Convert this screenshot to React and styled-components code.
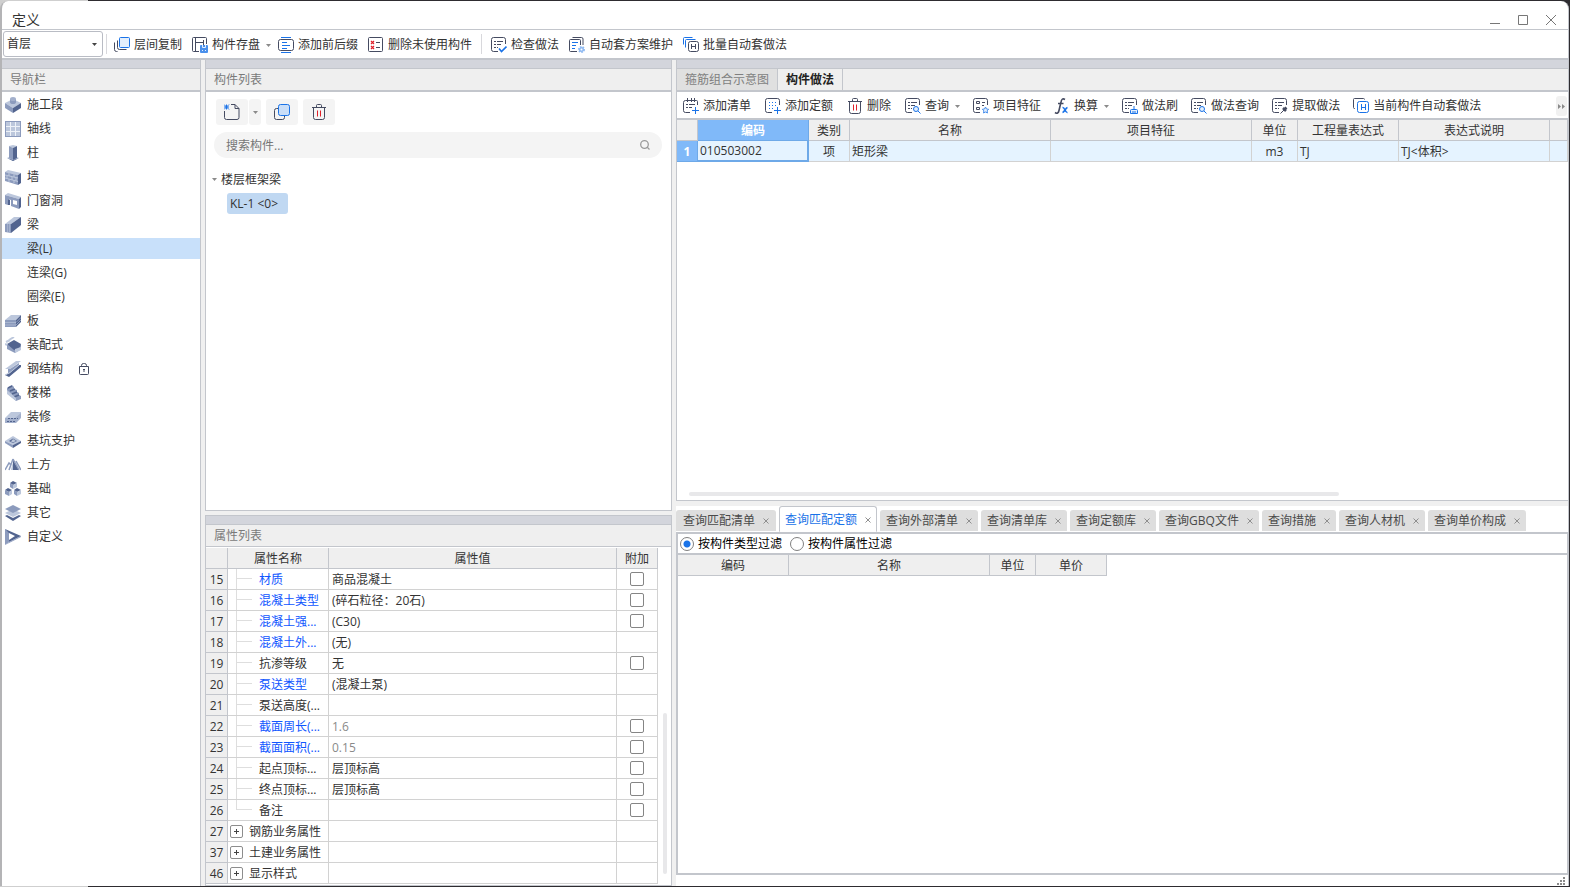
import React from 'react';
import styled, { createGlobalStyle, css } from 'styled-components';

const INK = '#454b61';
const BLUE = '#1a73e8';
const LINE = '#c3c6cc';
const GRID = '#d2d2d2';
const DARK = '#52648f';
const MID = '#8c9bbd';
const LIGHT = '#bcc7dc';

const GlobalStyle = createGlobalStyle`
	* {
		box-sizing: border-box;
	}
	body {
		margin: 0;
		background: linear-gradient(to right, #cfcfcf 88px, #2e2c30 88px);
		font-family: "Open Sans", "Noto Sans CJK SC", sans-serif;
		font-size: 12px;
		line-height: 20px;
		color: #333;
	}
	button, input, select {
		font: inherit;
		color: inherit;
		margin: 0;
	}
	button {
		border: none;
		background: none;
		padding: 0;
		white-space: nowrap;
	}
	svg {
		display: block;
		flex: none;
	}
`;

const Frame = styled.div`
	display: flex;
	flex-direction: column;
	height: calc(100vh - 2px);
	margin: 1px 1px 1px 0;
	border-left: 2px solid #b4b4b6;
	border-right: 1px solid ${LINE};
	border-radius: 8px 8px 0 0;
	background: #fff;
	overflow: hidden;
`;

const TitleBar = styled.header`
	display: flex;
	align-items: center;
	justify-content: space-between;
	height: 29px;
	padding: 9px 11px 0 10px;
	border-bottom: 1px solid ${LINE};
	font-size: 14px;
`;

const WindowButtons = styled.div`
	display: flex;
	gap: 16px;
`;

const MainBar = styled.div`
	display: flex;
	align-items: center;
	height: 30px;
	padding-left: 1px;
	border-bottom: 2px solid ${LINE};
`;

const FloorPicker = styled.div`
	position: relative;
	margin-right: 3px;
	& > select {
		display: block;
		width: 100px;
		height: 26px;
		padding: 0 3px;
		border: 1px solid #b9bcc4;
		border-radius: 3px;
		background: #fff;
		appearance: none;
	}
	& > svg {
		position: absolute;
		right: 6px;
		top: 12px;
		pointer-events: none;
	}
`;

const Divider = styled.span`
	width: 1px;
	height: 20px;
	background: #d8d8dc;
	margin: 0 ${({ $after }) => $after}px 0 ${({ $before }) => $before || 0}px;
`;

const MainButton = styled.button`
	display: flex;
	align-items: center;
	gap: 4px;
	height: 26px;
	padding: 2px ${({ $menu }) => $menu ? '2px' : '5px'} 0 5px;
	& > svg:nth-of-type(2) {
		margin-left: 2px;
	}
`;

const Workspace = styled.div`
	display: flex;
	gap: 4px;
	flex: 1;
	min-height: 0;
	background: #f0f0f0;
`;

const Panel = styled.section`
	display: flex;
	flex-direction: column;
	min-height: 0;
	min-width: 0;
	background: #fff;
	border: solid ${LINE};
	border-width: ${({ $edges }) => $edges || '0 1px 1px'};
`;

const NavPanel = styled(Panel)`
	flex: 0 0 199px;
`;

const MiddleColumn = styled.div`
	display: flex;
	flex-direction: column;
	gap: 4px;
	flex: 0 0 467px;
	min-height: 0;
	& > :first-child {
		flex: 1;
	}
`;

const RightColumn = styled.div`
	display: grid;
	grid-template-columns: minmax(0, 1fr);
	grid-template-rows: minmax(0, 36fr) minmax(0, 31fr);
	gap: 5px;
	flex: 1;
	min-width: 0;
`;

const Strip = styled.div`
	flex: none;
	height: 9px;
	background: #d3d5dc;
	border-bottom: 1px solid ${LINE};
`;

const PanelTitle = styled.h2`
	flex: none;
	margin: 0;
	height: ${({ $thin }) => $thin ? '22px' : '23px'};
	padding: 0 8px;
	border-bottom: ${({ $thin }) => $thin ? '1px' : '2px'} solid ${LINE};
	background: #efefef;
	color: #7a7a7a;
	font-size: 12px;
	font-weight: 400;
	line-height: 21px;
`;

const NavList = styled.ul`
	display: flex;
	flex-direction: column;
	gap: 3px;
	margin: 0;
	padding: 2px 0;
	list-style: none;
`;

const NavItem = styled.button`
	display: flex;
	align-items: center;
	gap: 6px;
	width: 100%;
	height: 21px;
	padding-left: ${({ $child }) => $child ? '25px' : '3px'};
	background: ${({ $active }) => $active ? '#c8e0fa' : 'none'};
	& > svg:nth-of-type(2) {
		margin-left: 10px;
	}
`;

const ComponentTools = styled.div`
	display: flex;
	gap: 5px;
	padding: 7px 10px;
`;

const SplitButton = styled.div`
	display: flex;
	gap: 1px;
`;

const SoftButton = styled.button`
	display: flex;
	align-items: center;
	justify-content: center;
	width: ${({ $narrow }) => $narrow ? '12px' : '32px'};
	height: 26px;
	border-radius: 3px;
	background: #f4f4f4;
`;

const SearchBox = styled.label`
	display: flex;
	align-items: center;
	height: 26px;
	margin: 0 9px 0 8px;
	padding: 0 12px;
	border-radius: 13px;
	background: #f4f4f4;
	& > input {
		flex: 1;
		min-width: 0;
		padding: 1px 0 0;
		border: none;
		outline: none;
		background: none;
	}
	& > input::placeholder {
		color: #767676;
		opacity: 1;
	}
`;

const Tree = styled.div`
	display: flex;
	flex-direction: column;
	align-items: flex-start;
	gap: 3px;
	padding: 11px 6px;
`;

const TreeGroup = styled.button`
	display: flex;
	align-items: center;
	gap: 4px;
	height: 21px;
`;

const TreeLeaf = styled.button`
	height: 21px;
	margin-left: 15px;
	padding: 0 10px 0 3px;
	border-radius: 3px;
	background: #c0d8f2;
`;

const PropertyBody = styled.div`
	display: flex;
	padding: 1px 0;
	& > table {
		flex: 1;
	}
`;

const ScrollTrack = styled.div`
	display: flex;
	align-items: flex-end;
	justify-content: center;
	flex: 0 0 13px;
	padding-bottom: 10px;
	&::after {
		content: '';
		width: 4px;
		height: 161px;
		border-radius: 2px;
		background: #e8e8ea;
	}
`;

const Table = styled.table`
	table-layout: fixed;
	width: ${({ $width }) => $width || '100%'};
	border-collapse: separate;
	border-spacing: 0;
`;

const cell = css`
	height: 21px;
	padding: 2px 3px 0;
	border: solid ${GRID};
	border-width: 0 1px 1px 0;
	line-height: 18px;
	font-weight: 400;
	white-space: nowrap;
	overflow: hidden;
`;

const Th = styled.th`
	${cell}
	background: #efefef;
	border-color: ${LINE};
	text-align: center;
	${({ $current }) => $current && css`
		background: #80b9f9;
		border-color: #6ea9e8;
		color: #fff;
		font-weight: 700;
	`}
`;

const Td = styled.td`
	${cell}
	text-align: ${({ $center }) => $center ? 'center' : 'left'};
	color: ${({ $muted }) => $muted ? '#8a8a8a' : 'inherit'};
`;

const CheckCell = styled.td`
	${cell}
	padding: 0;
`;

const PropertyName = styled.td`
	${cell}
	padding: 0;
	color: ${({ $blue }) => $blue ? '#0f56ff' : 'inherit'};
	& > div {
		display: flex;
		align-items: center;
		height: 20px;
	}
	& > div > span:last-child {
		padding-top: 2px;
	}
`;

const Branch = styled.span`
	flex: none;
	width: 16px;
	height: 20px;
	margin: 0 7px 0 8px;
	background:
		linear-gradient(#dedede, #dedede) 0 0 / 1px ${({ $last }) => $last ? '10px' : '20px'} no-repeat,
		linear-gradient(#dedede, #dedede) 0 9px / 16px 1px no-repeat;
`;

const Expander = styled.button`
	display: flex;
	align-items: center;
	justify-content: center;
	flex: none;
	width: 13px;
	height: 13px;
	margin: 0 6px 0 2px;
	border: 1px solid #8d8d8d;
	border-radius: 2px;
`;

const Check = styled.input`
	display: block;
	width: 14px;
	height: 14px;
	border: 1px solid #858585;
	border-radius: 2px;
	background: #fff;
	appearance: none;
	${CheckCell} > && {
		margin: 0 auto;
	}
`;

const PracticeRow = styled.tr`
	& > td {
		padding: 1px 2px 0;
		background: #e5f3ff;
	}
	& > td:nth-child(2) {
		border: solid #6ea9e8;
		border-width: 0 2px 2px 0;
	}
`;

const PanelTabs = styled.div`
	display: flex;
	flex: none;
	height: 23px;
	border-bottom: 2px solid ${LINE};
	background: #efefef;
`;

const PanelTab = styled.button`
	padding: 0 8px;
	border-right: 1px solid ${LINE};
	background: ${({ $active }) => $active ? '#efefef' : '#e0e0e0'};
	color: ${({ $active }) => $active ? '#222' : '#7f7f7f'};
	font-weight: ${({ $active }) => $active ? 700 : 400};
`;

const PracticeBar = styled.div`
	display: flex;
	align-items: center;
	flex: none;
	height: 28px;
	padding: 2px 0 0 6px;
	border-bottom: 2px solid ${LINE};
`;

const ToolGroup = styled.div`
	display: flex;
	gap: ${({ $gap }) => $gap}px;
	padding-right: ${({ $gap }) => $gap}px;
`;

const ToolButton = styled.button`
	display: flex;
	align-items: center;
	gap: 4px;
	& > svg:nth-of-type(2) {
		margin-left: 2px;
	}
`;

const MoreButton = styled.button`
	display: flex;
	align-items: center;
	justify-content: center;
	flex: none;
	width: 11px;
	height: 20px;
	margin: 0 1px 0 auto;
	border-radius: 3px;
	background: #f1f1f1;
`;

const PracticeBody = styled.div`
	display: flex;
	flex-direction: column;
	justify-content: space-between;
	flex: 1;
	min-height: 0;
	&::after {
		content: '';
		width: 73%;
		height: 4px;
		margin: 0 0 4px 12px;
		border-radius: 2px;
		background: #e8e8ea;
	}
`;

const QueryArea = styled.section`
	display: flex;
	flex-direction: column;
	min-height: 0;
	background: #fff;
`;

const QueryTabs = styled.div`
	display: flex;
	align-items: flex-end;
	gap: 3px;
	flex: none;
	height: 26px;
`;

const QueryTab = styled.div`
	display: flex;
	align-items: center;
	gap: 8px;
	height: ${({ $active }) => $active ? '26px' : '22px'};
	padding: ${({ $active }) => $active ? '2px 5px 0' : '0 6px'};
	border: ${({ $active }) => $active ? `1px solid ${LINE}` : 'none'};
	border-bottom: 1px solid #fff;
	border-radius: 3px 3px 0 0;
	background: ${({ $active }) => $active ? '#fff' : '#dedede'};
	color: ${({ $active }) => $active ? BLUE : '#4a4a4a'};
	&:first-child {
		padding: 0 7px;
	}
`;

const QueryBody = styled.div`
	flex: 1;
	min-height: 0;
	border: 2px solid ${LINE};
	border-width: 2px 1px 2px 2px;
`;

const FilterRow = styled.div`
	display: flex;
	align-items: center;
	gap: 8px;
	height: 21px;
	padding-left: 2px;
	border-bottom: 2px solid ${LINE};
	color: #000;
	& > label {
		display: flex;
		align-items: center;
		gap: 4px;
	}
`;

const Radio = styled.input`
	width: 14px;
	height: 14px;
	border: 1px solid #808080;
	border-radius: 50%;
	background: #fff;
	appearance: none;
	&:checked {
		background: radial-gradient(circle, ${BLUE} 3px, #fff 4px);
	}
`;

const StatusLine = styled.footer`
	display: flex;
	align-items: center;
	justify-content: flex-end;
	flex: none;
	height: 11px;
	padding-right: 3px;
`;

const Icon = ({ size = 16, children }) => (
	<svg width={size} height={size} viewBox={`0 0 ${size} ${size}`} fill="none" stroke={INK} aria-hidden="true">{children}</svg>
);

const Caret = ({ color = '#8a8a8a' }) => (
	<svg width="5" height="3" viewBox="0 0 5 3" fill={color} aria-hidden="true"><path d="M0 0h5L2.5 3z" /></svg>
);

const CloseMark = () => (
	<svg width="6" height="6" viewBox="0 0 6 6" stroke="#8f8f8f" aria-hidden="true"><path d="M.5.5l5 5M5.5.5l-5 5" /></svg>
);

const Trash = () => (
	<Icon>
		<path d="M1 3.5h14M5.5 3.5v-2a1 1 0 0 1 1-1h3a1 1 0 0 1 1 1v2M2.5 3.5v10a2 2 0 0 0 2 2h7a2 2 0 0 0 2-2v-10" />
		<path d="M6.5 6.5v6M9.5 6.5v6" stroke="#e0202a" />
	</Icon>
);

// sheet outline with its lower right corner left open for a small badge
const OpenSheet = ({ children }) => (
	<Icon>
		<path d="M7 14.5H2.5a2 2 0 0 1-2-2v-10a2 2 0 0 1 2-2h10a2 2 0 0 1 2 2V7" />
		{children}
	</Icon>
);

const ListLines = () => <path d="M3 4.5h2M6 4.5h6M3 7.5h2M6 7.5h4M3 10.5h2M6 10.5h1" />;

const toolIcons = {
	layerCopy: (
		<Icon>
			<rect x="5.5" y=".5" width="10" height="10" rx="1" stroke={BLUE} fill="#e4effc" />
			<path d="M3.5 3.5v7a2 2 0 0 0 2 2h7M.5 5.5v7a2 2 0 0 0 2 2h1" />
		</Icon>
	),
	save: (
		<Icon>
			<path d="M7 14.5H1.5a1 1 0 0 1-1-1v-12a1 1 0 0 1 1-1h12a1 1 0 0 1 1 1V7M3.5.5v14M3.5 5.5h8M11.5 3v5" />
			<rect x="8" y="8" width="8" height="8" rx="1" fill="#4a90ec" stroke="none" />
			<path d="M10.5 8v2.500h3V8M10 13.500h1M13 13.500h1" stroke="#e4effc" />
		</Icon>
	),
	affix: (
		<Icon>
			<path d="M3 .5h10M3 15.5h10M4 5.5h5M4 8.5h8M4 11.5h5" stroke={BLUE} />
			<rect x=".5" y="2.5" width="15" height="11" rx="2" />
		</Icon>
	),
	unused: (
		<Icon>
			<rect x=".5" y=".5" width="14" height="14" rx="1" />
			<path d="M3 4l3 3M6 4L3 7M3 9l3 3M6 9l-3 3" stroke="#e0202a" strokeWidth="1.2" />
			<path d="M8 5.5h4M8 10.5h4" />
		</Icon>
	),
	check: (
		<OpenSheet>
			<ListLines />
			<path d="M8 11.5l2.5 3 5-5" stroke={BLUE} strokeWidth="1.6" />
		</OpenSheet>
	),
	plan: (
		<Icon>
			<path d="M8 14.5H1.5a1 1 0 0 1-1-1v-10a1 1 0 0 1 1-1h9a1 1 0 0 1 1 1V8M3.5.5h9A1.5 1.5 0 0 1 14 2v6" />
			<path d="M3 5.5h6M3 8.5h4M3 11.5h3" stroke={BLUE} />
			<circle cx="12.5" cy="12.5" r="2.5" fill="#8fbaf2" stroke="#8fbaf2" strokeDasharray="1.5 1" strokeWidth="2" />
			<circle cx="12.5" cy="12.5" r="1" fill="#fff" stroke="none" />
		</Icon>
	),
	batch: (
		<Icon>
			<path d="M.5 7.5v-6a1 1 0 0 1 1-1h8M2.5 10.5v-7a1 1 0 0 1 1-1h9" stroke={BLUE} />
			<rect x="5.5" y="4.5" width="10" height="10" rx="2" fill="#fff" />
			<path d="M8.5 7v5M12.5 7v5M8.5 9.500h4" />
		</Icon>
	),
	addList: (
		<Icon>
			<path d="M7 14.5H2.500a2 2 0 0 1-2-2v-8a2 2 0 0 1 2-2h11a1 1 0 0 1 1 1V7M4.5 0v4M8.5 0v4M11.5 0v4M3 6.5h2M6 6.5h6M3 9.5h2M6 9.5h3" />
			<path d="M12.5 9v7M9 12.5h7" stroke={BLUE} />
		</Icon>
	),
	addQuota: (
		<Icon>
			<path d="M7 14.5H2.5a2 2 0 0 1-2-2v-10a2 2 0 0 1 2-2h10a2 2 0 0 1 2 2V7" />
			<path d="M4 4.5h8M4 7.5h8M4 10.5h4" stroke={BLUE} strokeDasharray="1 2" />
			<path d="M12.5 9v7M9 12.5h7" stroke={BLUE} />
		</Icon>
	),
	trash: <Trash />,
	query: (
		<OpenSheet>
			<ListLines />
			<circle cx="11" cy="11" r="2.5" stroke={BLUE} fill="#e4effc" />
			<path d="M13 13l2.5 2.5" stroke={BLUE} />
		</OpenSheet>
	),
	feature: (
		<OpenSheet>
			<path d="M3.500 3.500h3v2h-3zM3.500 9.500h3v2h-3zM9 4.500h3M9 7.500h2" />
			<path d="M12.5 9l1 2 2.200.3-1.600 1.500.4 2.200-2-1-2 1 .4-2.200-1.600-1.500 2.200-.3z" stroke="#4a90ec" fill="#e4effc" />
		</OpenSheet>
	),
	convert: (
		<Icon>
			<path d="M11 1.500C8.500 0 7.500 1.500 7 4L5 12.500C4.500 15 3 16 1 14.500M4 5.500h5.500" strokeWidth="1.600" />
			<path d="M8.500 9.500c2.500-.5 2.500 5.500 5 5M13.500 9.500c-2 .5-3 4.500-5 5" stroke={BLUE} strokeWidth="1.600" />
		</Icon>
	),
	brush: (
		<OpenSheet>
			<ListLines />
			<path d="M12 8v3M8.5 15.5v-3a1 1 0 0 1 1-1h5a1 1 0 0 1 1 1v3zM11 13v2M13 13v2" stroke={BLUE} fill="#e4effc" />
		</OpenSheet>
	),
	extract: (
		<OpenSheet>
			<ListLines />
			<path d="M8.5 15.5l4-4" />
			<path d="M11 10l3 3M12.5 11.5l2-2" strokeWidth="2.5" />
		</OpenSheet>
	),
	current: (
		<Icon>
			<path d="M2 10.5h-.5a1 1 0 0 1-1-1v-8a1 1 0 0 1 1-1h9a1 1 0 0 1 1 1" />
			<rect x="4.5" y="3.5" width="11" height="11" rx="2" fill="#fff" stroke={BLUE} />
			<path d="M8.500 6v6M12.500 6v6M8.500 9.500h4" stroke={BLUE} />
		</Icon>
	),
};

const navIcons = {
	stage: (
		<>
			<path d="M0 6l8-4 8 4-8 5z" fill={LIGHT} />
			<path d="M0 6l8 5v5l-8-5z" fill={MID} />
			<path d="M16 6l-8 5v5l8-5z" fill={DARK} />
			<path d="M5 2h6v3a3 2 0 0 1-6 0z" fill={MID} />
			<ellipse cx="8" cy="2" rx="3" ry="2" fill="#a3b0cc" />
		</>
	),
	axis: (
		<>
			<path d="M0 0h16v16H0z" fill={MID} />
			<path d="M1 1h14v14H1z" fill={LIGHT} />
			<path d="M5.5 1v14M10.5 1v14M1 5.5h14M1 10.5h14" stroke="#eef2f8" />
		</>
	),
	column: (
		<>
			<path d="M2 13l6-3 6 3-6 3z" fill={LIGHT} />
			<path d="M2 13l6 2 6-2-6 3z" fill={DARK} />
			<path d="M4 1l4-1 4 1-4 2z" fill={LIGHT} />
			<path d="M4 1l4 2v12l-4-2z" fill={MID} />
			<path d="M12 1L8 3v12l4-2z" fill={DARK} />
		</>
	),
	wall: (
		<>
			<path d="M0 3l3-2 13 3-3 2z" fill={LIGHT} />
			<path d="M0 3l13 3v10L0 12z" fill={MID} />
			<path d="M16 4l-3 2v10l3-2z" fill={DARK} />
			<path d="M0 6l13 3M0 9l13 3.5M4 4v3M9 5v3M2 7v3M7 8v3M11 9v3M4 10v3M9 11v3" stroke={LIGHT} />
		</>
	),
	door: (
		<>
			<path d="M0 2l3-2 13 4-2 2z" fill={LIGHT} />
			<path d="M0 2l14 4v10l-8-3V7L3 6v6l-3-1z" fill={MID} />
			<path d="M16 4l-2 2v10l2-2z" fill={DARK} />
			<path d="M8 7l4 1v4l-4-1z" fill="#fff" />
			<path d="M3 6l2 1v5H3z" fill={DARK} />
		</>
	),
	beam: (
		<>
			<path d="M0 7l9-7h7L6 7z" fill={LIGHT} />
			<path d="M0 7h6v9l-6-1z" fill={MID} />
			<path d="M6 7l10-7v8L6 16z" fill={DARK} />
			<path d="M2.5 7v8M4.5 7v8" stroke={LIGHT} strokeWidth=".5" />
		</>
	),
	slab: (
		<>
			<path d="M0 7l6-5h10l-5 5z" fill={LIGHT} />
			<path d="M0 7h11v7H0z" fill={MID} />
			<path d="M11 7l5-5v7l-5 5z" fill={DARK} />
			<path d="M0 9.500h11l5-5M0 12h11l5-5" stroke={LIGHT} strokeWidth=".6" />
		</>
	),
	prefab: (
		<>
			<path d="M2 8l6-4 8 4v4l-6 4-8-4z" fill={MID} />
			<path d="M2 7l7-4 7 4-2 5-5 1z" fill={DARK} />
			<path d="M10 12l6-2v3l-6 3z" fill={LIGHT} />
			<path d="M1 5l4-2M4 3l5-3M2 8L0 7" stroke={LIGHT} strokeWidth="2" />
		</>
	),
	steel: (
		<>
			<path d="M0 8L11 0h5L5 8z" fill={LIGHT} />
			<path d="M3 8h2l9-6v3l-8 8-3-1z" fill={MID} />
			<path d="M0 14l5-2 9-8h2v2L4 16z" fill={DARK} />
			<path d="M0 14l5-2.500 9-7.500" stroke={LIGHT} />
		</>
	),
	stair: (
		<>
			<path d="M2 3l5-3 2 2v2l3 1v2l2 1v2l2 1v3l-5 2L2 8z" fill={MID} />
			<path d="M3 3l4-2M5 6l5-2M7 9l5-2M9 12l5-2" stroke={DARK} strokeWidth="1.5" />
			<path d="M2 5l9 8v3L2 9z" fill={LIGHT} />
		</>
	),
	finish: (
		<>
			<path d="M0 9l6-6h10v5l-5 3H0z" fill={LIGHT} />
			<path d="M0 9h10l6-5v5l-5 5H0z" fill="#a3b0cc" />
			<path d="M3 9.500h10M2 12.500h9" stroke={DARK} strokeDasharray="2 1" />
		</>
	),
	pit: (
		<>
			<path d="M0 8l8-5 8 5-8 4z" fill={LIGHT} />
			<path d="M0 8l8 4v3L0 10z" fill={MID} />
			<path d="M16 8l-8 4v3l8-5z" fill={DARK} />
			<path d="M4 8l4-2.500L12 8l-4 2z" fill={DARK} />
			<path d="M6 8.500l2-2.500 3 2-3 1.500z" fill={LIGHT} />
		</>
	),
	earth: (
		<>
			<path d="M8 3l6 10H8z" fill={DARK} />
			<path d="M0 13l4-7 2 2M8 2L4 13M8 2l6 11M11 4l5 9" stroke={MID} strokeWidth="1.5" />
			<path d="M7 8l-1 5h2V6z" fill={LIGHT} />
		</>
	),
	base: (
		<>
			<path d="M5 2l3-2 4 2-4 2zM0 9l3-2 4 2-3 2zM9 9l3-2 4 2-4 2z" fill={DARK} />
			<path d="M5 2l3 2v4L5 6zM0 9l4 2v4l-4-2zM9 9l3 2v4l-3-2z" fill={MID} />
			<path d="M12 2L8 4v4l4-2zM7 9l-3 2v4l3-2zM16 9l-4 2v4l4-2z" fill={LIGHT} />
		</>
	),
	other: (
		<>
			<path d="M0 11l8-4 8 4-8 5z" fill={DARK} />
			<path d="M0 9l8-4 8 4-8 4z" fill="#fff" />
			<path d="M0 8l8-4 8 4-8 4z" fill={LIGHT} />
			<path d="M0 4l8-4 8 4-8 4z" fill={MID} />
		</>
	),
	custom: (
		<>
			<path d="M0 0l4 3v10l-4 3z" fill={MID} />
			<path d="M0 0l16 7-12 6v-2l6-4-6-3z" fill={DARK} />
			<path d="M0 16l4-3 12-6v1z" fill={MID} />
		</>
	),
};

const NavIcon = ({ name }) => (
	<svg width="16" height="16" viewBox="0 0 16 16" fill="none" aria-hidden="true">{navIcons[name]}</svg>
);

const Lock = () => (
	<svg width="10" height="12" viewBox="0 0 10 12" fill="none" stroke={INK} aria-hidden="true">
		<path d="M.5 3.5h9v7a1 1 0 0 1-1 1h-7a1 1 0 0 1-1-1zM2.5 3.500v-1a2 2 0 0 1 2-2h1a2 2 0 0 1 2 2v1" />
		<path d="M5 6v3M4 6.500h2" />
	</svg>
);

const navItems = [
	{ label: '施工段', icon: 'stage' },
	{ label: '轴线', icon: 'axis' },
	{ label: '柱', icon: 'column' },
	{ label: '墙', icon: 'wall' },
	{ label: '门窗洞', icon: 'door' },
	{ label: '梁', icon: 'beam' },
	{ label: '梁(L)' },
	{ label: '连梁(G)' },
	{ label: '圈梁(E)' },
	{ label: '板', icon: 'slab' },
	{ label: '装配式', icon: 'prefab' },
	{ label: '钢结构', icon: 'steel', locked: true },
	{ label: '楼梯', icon: 'stair' },
	{ label: '装修', icon: 'finish' },
	{ label: '基坑支护', icon: 'pit' },
	{ label: '土方', icon: 'earth' },
	{ label: '基础', icon: 'base' },
	{ label: '其它', icon: 'other' },
	{ label: '自定义', icon: 'custom' },
];

const mainTools = [
	{ label: '层间复制', icon: 'layerCopy' },
	{ label: '构件存盘', icon: 'save', menu: true },
	{ label: '添加前后缀', icon: 'affix' },
	{ label: '删除未使用构件', icon: 'unused' },
];

const practiceMainTools = [
	{ label: '检查做法', icon: 'check' },
	{ label: '自动套方案维护', icon: 'plan' },
	{ label: '批量自动套做法', icon: 'batch' },
];

const editTools = [
	{ label: '添加清单', icon: 'addList' },
	{ label: '添加定额', icon: 'addQuota' },
	{ label: '删除', icon: 'trash' },
];

const queryTools = [
	{ label: '查询', icon: 'query', menu: true },
	{ label: '项目特征', icon: 'feature' },
	{ label: '换算', icon: 'convert', menu: true },
	{ label: '做法刷', icon: 'brush' },
	{ label: '做法查询', icon: 'query' },
	{ label: '提取做法', icon: 'extract' },
	{ label: '当前构件自动套做法', icon: 'current' },
];

const properties = [
	{ no: 15, name: '材质', value: '商品混凝土', blue: true, check: true },
	{ no: 16, name: '混凝土类型', value: '(碎石粒径：20石)', blue: true, check: true },
	{ no: 17, name: '混凝土强...', value: '(C30)', blue: true, check: true },
	{ no: 18, name: '混凝土外...', value: '(无)', blue: true },
	{ no: 19, name: '抗渗等级', value: '无', check: true },
	{ no: 20, name: '泵送类型', value: '(混凝土泵)', blue: true },
	{ no: 21, name: '泵送高度(...', value: '' },
	{ no: 22, name: '截面周长(...', value: '1.6', blue: true, muted: true, check: true },
	{ no: 23, name: '截面面积(...', value: '0.15', blue: true, muted: true, check: true },
	{ no: 24, name: '起点顶标...', value: '层顶标高', check: true },
	{ no: 25, name: '终点顶标...', value: '层顶标高', check: true },
	{ no: 26, name: '备注', value: '', check: true, last: true },
	{ no: 27, name: '钢筋业务属性', value: '', group: true },
	{ no: 37, name: '土建业务属性', value: '', group: true },
	{ no: 46, name: '显示样式', value: '', group: true },
];

const queryTabs = ['查询匹配清单', '查询匹配定额', '查询外部清单', '查询清单库', '查询定额库', '查询GBQ文件', '查询措施', '查询人材机', '查询单价构成'];

const renderTools = (Button, tools) => tools.map(({ label, icon, menu }) => (
	<Button key={label} type="button" $menu={menu}>
		{toolIcons[icon]}
		<span>{label}</span>
		{menu && <Caret />}
	</Button>
));

const Columns = ({ widths }) => (
	<colgroup>
		{widths.map((width, i) => <col key={i} width={width} />)}
	</colgroup>
);

const NavBar = ({ active, onSelect }) => (
	<NavPanel as="nav" $edges="0 1px 0 0">
		<Strip />
		<PanelTitle>导航栏</PanelTitle>
		<NavList>
			{navItems.map(({ label, icon, locked }) => (
				<li key={label}>
					<NavItem type="button" $child={!icon} $active={label === active} onClick={() => onSelect(label)}>
						{icon && <NavIcon name={icon} />}
						<span>{label}</span>
						{locked && <Lock />}
					</NavItem>
				</li>
			))}
		</NavList>
	</NavPanel>
);

const ComponentPanel = () => (
	<Panel>
		<Strip />
		<PanelTitle>构件列表</PanelTitle>
		<ComponentTools>
			<SplitButton>
				<SoftButton type="button" aria-label="新建">
					<Icon>
						<path d="M7 .5h4l4 4v9a2 2 0 0 1-2 2H2.5a2 2 0 0 1-2-2V7M11 .5v4h4" />
						<path d="M0 .5l5 5M5 .5l-5 5M2.5.5v5M0 3h5" stroke={BLUE} />
					</Icon>
				</SoftButton>
				<SoftButton type="button" $narrow aria-label="新建选项"><Caret /></SoftButton>
			</SplitButton>
			<SoftButton type="button" aria-label="复制">
				<Icon>
					<path d="M4 4.5H2.5a2 2 0 0 0-2 2v7a2 2 0 0 0 2 2h6a2 2 0 0 0 2-2v-2" />
					<rect x="4.5" y=".5" width="11" height="11" rx="2" stroke={BLUE} fill="#c9def8" />
				</Icon>
			</SoftButton>
			<SoftButton type="button" aria-label="删除构件"><Trash /></SoftButton>
		</ComponentTools>
		<SearchBox>
			<input type="text" placeholder="搜索构件..." aria-label="搜索构件" />
			<svg width="10" height="10" viewBox="0 0 10 10" fill="none" stroke="#9a9a9a" strokeWidth="1.3" aria-hidden="true">
				<circle cx="4.5" cy="4.5" r="3.8" />
				<path d="M7 7l2.5 2.5" />
			</svg>
		</SearchBox>
		<Tree>
			<TreeGroup type="button"><Caret /><span>楼层框架梁</span></TreeGroup>
			<TreeLeaf type="button">{'KL-1 <0>'}</TreeLeaf>
		</Tree>
	</Panel>
);

const PropertyPanel = () => (
	<Panel $edges="1px">
		<Strip />
		<PanelTitle $thin>属性列表</PanelTitle>
		<PropertyBody>
			<Table>
				<Columns widths={[22, 101, undefined, 41]} />
				<thead>
					<tr>
						<Th />
						<Th>属性名称</Th>
						<Th>属性值</Th>
						<Th>附加</Th>
					</tr>
				</thead>
				<tbody>
					{properties.map(({ no, name, value, blue, muted, check, group, last }) => (
						<tr key={no}>
							<Th scope="row">{no}</Th>
							<PropertyName $blue={blue}>
								<div>
									{group ? (
										<Expander type="button" aria-label={name}>
											<svg width="5" height="5" viewBox="0 0 5 5" stroke="#444" aria-hidden="true"><path d="M2.5 0v5M0 2.5h5" /></svg>
										</Expander>
									) : <Branch $last={last} />}
									<span>{name}</span>
								</div>
							</PropertyName>
							<Td $muted={muted}>{value}</Td>
							<CheckCell>{check && <Check type="checkbox" aria-label={`附加 ${name}`} />}</CheckCell>
						</tr>
					))}
				</tbody>
			</Table>
			<ScrollTrack />
		</PropertyBody>
	</Panel>
);

const PracticePanel = () => (
	<Panel $edges="0 0 1px 1px">
		<Strip />
		<PanelTabs>
			<PanelTab type="button">箍筋组合示意图</PanelTab>
			<PanelTab type="button" $active>构件做法</PanelTab>
		</PanelTabs>
		<PracticeBar>
			<ToolGroup $gap={14}>{renderTools(ToolButton, editTools)}</ToolGroup>
			<ToolGroup $gap={13}>{renderTools(ToolButton, queryTools)}</ToolGroup>
			<MoreButton type="button" aria-label="更多">
				<svg width="7" height="5" viewBox="0 0 7 5" fill="#8a8a8a" aria-hidden="true"><path d="M0 0l3 2.5L0 5zM4 0l3 2.5L4 5z" /></svg>
			</MoreButton>
		</PracticeBar>
		<PracticeBody>
			<Table>
				<Columns widths={[21, 111, 41, 201, 201, 46, 101, 151, undefined]} />
				<thead>
					<tr>
						<Th />
						<Th $current>编码</Th>
						<Th>类别</Th>
						<Th>名称</Th>
						<Th>项目特征</Th>
						<Th>单位</Th>
						<Th>工程量表达式</Th>
						<Th>表达式说明</Th>
						<Th />
					</tr>
				</thead>
				<tbody>
					<PracticeRow>
						<Th scope="row" $current>1</Th>
						<Td>010503002</Td>
						<Td $center>项</Td>
						<Td>矩形梁</Td>
						<Td />
						<Td $center>m3</Td>
						<Td>TJ</Td>
						<Td>{'TJ<体积>'}</Td>
						<Td />
					</PracticeRow>
				</tbody>
			</Table>
		</PracticeBody>
	</Panel>
);

const QueryPanel = ({ active, onSelect, filter, onFilter }) => (
	<QueryArea>
		<QueryTabs>
			{queryTabs.map(label => (
				<QueryTab key={label} $active={label === active}>
					<button type="button" onClick={() => onSelect(label)}>{label}</button>
					<button type="button" aria-label={`关闭 ${label}`}><CloseMark /></button>
				</QueryTab>
			))}
		</QueryTabs>
		<QueryBody>
			<FilterRow>
				<label>
					<Radio type="radio" name="filter" checked={filter === 'type'} onChange={() => onFilter('type')} />
					按构件类型过滤
				</label>
				<label>
					<Radio type="radio" name="filter" checked={filter === 'property'} onChange={() => onFilter('property')} />
					按构件属性过滤
				</label>
			</FilterRow>
			<Table $width="429px">
				<Columns widths={[111, 201, 46, 71]} />
				<thead>
					<tr>
						<Th>编码</Th>
						<Th>名称</Th>
						<Th>单位</Th>
						<Th>单价</Th>
					</tr>
				</thead>
			</Table>
		</QueryBody>
		<StatusLine>
			<svg width="8" height="8" viewBox="0 0 8 8" fill="#8a8a8a" aria-hidden="true">
				<path d="M6 0h2v2H6zM3 3h2v2H3zM6 3h2v2H6zM0 6h2v2H0zM3 6h2v2H3zM6 6h2v2H6z" />
			</svg>
		</StatusLine>
	</QueryArea>
);

export default class App extends React.PureComponent {

	constructor(props) {
		super(props);
		this.state = {
			nav: '梁(L)',
			queryTab: '查询匹配定额',
			filter: 'type',
		};
	}

	handleNav = nav => this.setState({ nav });

	handleQueryTab = queryTab => this.setState({ queryTab });

	handleFilter = filter => this.setState({ filter });

	render() {
		const { nav, queryTab, filter } = this.state;
		return (
			<React.Fragment>
				<GlobalStyle />
				<Frame>
					<TitleBar>
						<span>定义</span>
						<WindowButtons>
							<button type="button" aria-label="最小化">
								<Icon size={12}><path d="M1 9.5h10" stroke="#777" /></Icon>
							</button>
							<button type="button" aria-label="最大化">
								<Icon size={12}><path d="M1.5 1.5h9v9h-9z" stroke="#777" /></Icon>
							</button>
							<button type="button" aria-label="关闭">
								<Icon size={12}><path d="M1 1l10 10M11 1L1 11" stroke="#777" /></Icon>
							</button>
						</WindowButtons>
					</TitleBar>
					<MainBar>
						<FloorPicker>
							<select aria-label="楼层" defaultValue="首层">
								<option>首层</option>
							</select>
							<Caret color="#444" />
						</FloorPicker>
						<Divider $after={2} />
						{renderTools(MainButton, mainTools)}
						<Divider $before={4} $after={4} />
						{renderTools(MainButton, practiceMainTools)}
					</MainBar>
					<Workspace>
						<NavBar active={nav} onSelect={this.handleNav} />
						<MiddleColumn>
							<ComponentPanel />
							<PropertyPanel />
						</MiddleColumn>
						<RightColumn>
							<PracticePanel />
							<QueryPanel active={queryTab} onSelect={this.handleQueryTab} filter={filter} onFilter={this.handleFilter} />
						</RightColumn>
					</Workspace>
				</Frame>
			</React.Fragment>
		)
	}

}
